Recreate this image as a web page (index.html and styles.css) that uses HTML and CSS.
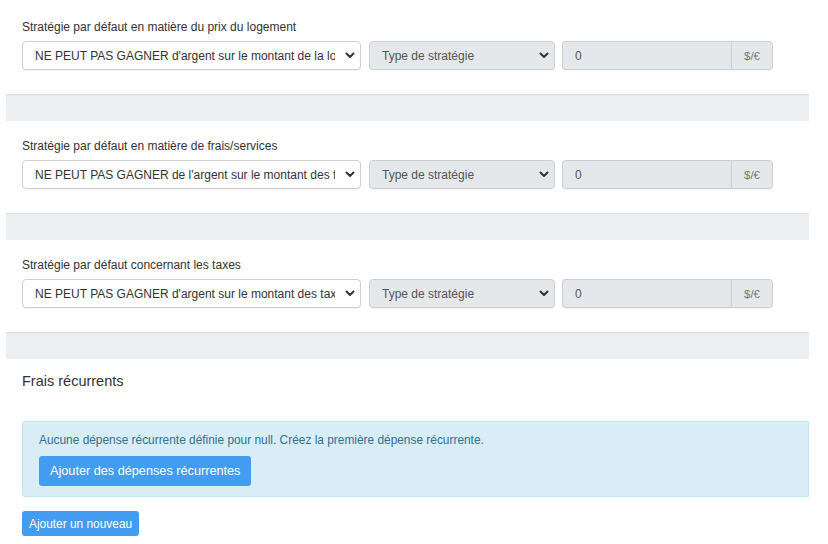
FILE: index.html
```html
<!DOCTYPE html>
<html lang="fr">
<head>
<meta charset="utf-8">
<title>Stratégies</title>
<link rel="stylesheet" href="styles.css">
</head>
<body>
<div class="page">
  <div class="section">
    <div class="lbl">Stratégie par défaut en matière du prix du logement</div>
    <div class="row">
      <div class="sel sel-main"><span class="sel-text">NE PEUT PAS GAGNER d'argent sur le montant de la location</span><svg class="chev" width="10" height="7" viewBox="0 0 10 7"><path d="M1.5 1.5 L5 5 L8.5 1.5" fill="none" stroke="#333" stroke-width="2" stroke-linecap="round" stroke-linejoin="round"/></svg></div>
      <div class="sel sel-type"><span class="sel-text">Type de stratégie</span><svg class="chev" width="10" height="7" viewBox="0 0 10 7"><path d="M1.5 1.5 L5 5 L8.5 1.5" fill="none" stroke="#333" stroke-width="2" stroke-linecap="round" stroke-linejoin="round"/></svg></div>
      <div class="igroup"><span class="inp">0</span><span class="addon">$/€</span></div>
    </div>
  </div>
  <div class="band"></div>
  <div class="section">
    <div class="lbl">Stratégie par défaut en matière de frais/services</div>
    <div class="row">
      <div class="sel sel-main"><span class="sel-text">NE PEUT PAS GAGNER de l'argent sur le montant des frais/services</span><svg class="chev" width="10" height="7" viewBox="0 0 10 7"><path d="M1.5 1.5 L5 5 L8.5 1.5" fill="none" stroke="#333" stroke-width="2" stroke-linecap="round" stroke-linejoin="round"/></svg></div>
      <div class="sel sel-type"><span class="sel-text">Type de stratégie</span><svg class="chev" width="10" height="7" viewBox="0 0 10 7"><path d="M1.5 1.5 L5 5 L8.5 1.5" fill="none" stroke="#333" stroke-width="2" stroke-linecap="round" stroke-linejoin="round"/></svg></div>
      <div class="igroup"><span class="inp">0</span><span class="addon">$/€</span></div>
    </div>
  </div>
  <div class="band"></div>
  <div class="section">
    <div class="lbl">Stratégie par défaut concernant les taxes</div>
    <div class="row">
      <div class="sel sel-main"><span class="sel-text">NE PEUT PAS GAGNER d'argent sur le montant des taxes</span><svg class="chev" width="10" height="7" viewBox="0 0 10 7"><path d="M1.5 1.5 L5 5 L8.5 1.5" fill="none" stroke="#333" stroke-width="2" stroke-linecap="round" stroke-linejoin="round"/></svg></div>
      <div class="sel sel-type"><span class="sel-text">Type de stratégie</span><svg class="chev" width="10" height="7" viewBox="0 0 10 7"><path d="M1.5 1.5 L5 5 L8.5 1.5" fill="none" stroke="#333" stroke-width="2" stroke-linecap="round" stroke-linejoin="round"/></svg></div>
      <div class="igroup"><span class="inp">0</span><span class="addon">$/€</span></div>
    </div>
  </div>
  <div class="band"></div>
  <div class="recurring">
    <h4 class="heading">Frais récurrents</h4>
    <div class="alert">
      <p class="alert-text">Aucune dépense récurrente définie pour null. Créez la première dépense récurrente.</p>
      <button class="btn btn-lg">Ajouter des dépenses récurrentes</button>
    </div>
    <button class="btn btn-sm">Ajouter un nouveau</button>
  </div>
</div>
</body>
</html>
```
FILE: styles.css
```css
* { box-sizing: border-box; }
html, body { margin: 0; padding: 0; background: #fff; }
body {
  font-family: "Liberation Sans", Arial, sans-serif;
  color: #333;
  font-size: 12px;
}
.page {
  margin: 2px 19px 0 6px;
}
.section {
  padding: 16px 16px 24px;
}
.lbl {
  font-size: 12px;
  line-height: 18px;
  margin-bottom: 5px;
  color: #333;
}
.row {
  display: flex;
  gap: 7px;
  align-items: stretch;
}
.sel {
  display: flex;
  align-items: center;
  height: 29px;
  border: 1px solid #ccd0d4;
  border-radius: 4px;
  padding: 0 5px 0 12px;
  background: #fff;
  color: #333;
  box-shadow: 0 1px 1px rgba(0,0,0,0.05);
}
.sel-text {
  flex: 1;
  min-width: 0;
  overflow: hidden;
  white-space: nowrap;
  font-size: 12px;
  margin-right: 10px;
}
.chev { flex: none; }
.sel-main { width: 339px; margin-right: 1px; }
.sel-type {
  width: 186px;
  background: #e5e8eb;
  color: #555;
}
.igroup {
  display: flex;
  width: 211px;
  height: 29px;
}
.inp {
  display: flex;
  align-items: center;
  width: 169px;
  height: 29px;
  border: 1px solid #ccd0d4;
  border-right: 0;
  border-radius: 4px 0 0 4px;
  background: #e5e8eb;
  padding: 0 12px;
  font-size: 12px;
  color: #555;
  box-shadow: 0 1px 1px rgba(0,0,0,0.05);
}
.addon {
  width: 42px;
  display: flex;
  align-items: center;
  justify-content: center;
  border: 1px solid #ccd0d4;
  border-radius: 0 4px 4px 0;
  background: #e5e8eb;
  color: #777;
  font-size: 11.5px;
  box-shadow: 0 1px 1px rgba(0,0,0,0.05);
}
.band {
  height: 27px;
  background: #edf0f3;
  box-shadow: inset 0 2px 2px -1px rgba(0,0,0,0.09);
}
.recurring {
  padding: 13px 0 0 16px;
}
.heading {
  margin: 0 0 31px;
  font-size: 14.5px;
  line-height: 18px;
  font-weight: normal;
  color: #333;
}
.alert {
  background: #d9edf7;
  border: 1px solid #bce8f1;
  border-radius: 3px 0 0 3px;
  padding: 9px 16px 10px;
  margin-bottom: 14px;
}
.alert-text {
  margin: 0 0 7px;
  font-size: 11.9px;
  line-height: 18px;
  color: #31708f;
}
.btn {
  display: block;
  border: 0;
  border-radius: 3px;
  background: #439cf0;
  color: #fff;
  font-family: "Liberation Sans", Arial, sans-serif;
  white-space: nowrap;
  cursor: pointer;
}
.btn-lg {
  height: 30px;
  padding: 0 11px;
  font-size: 12.7px;
}
.btn-sm {
  height: 25px;
  padding: 0 7px;
  font-size: 11.9px;
}
```
